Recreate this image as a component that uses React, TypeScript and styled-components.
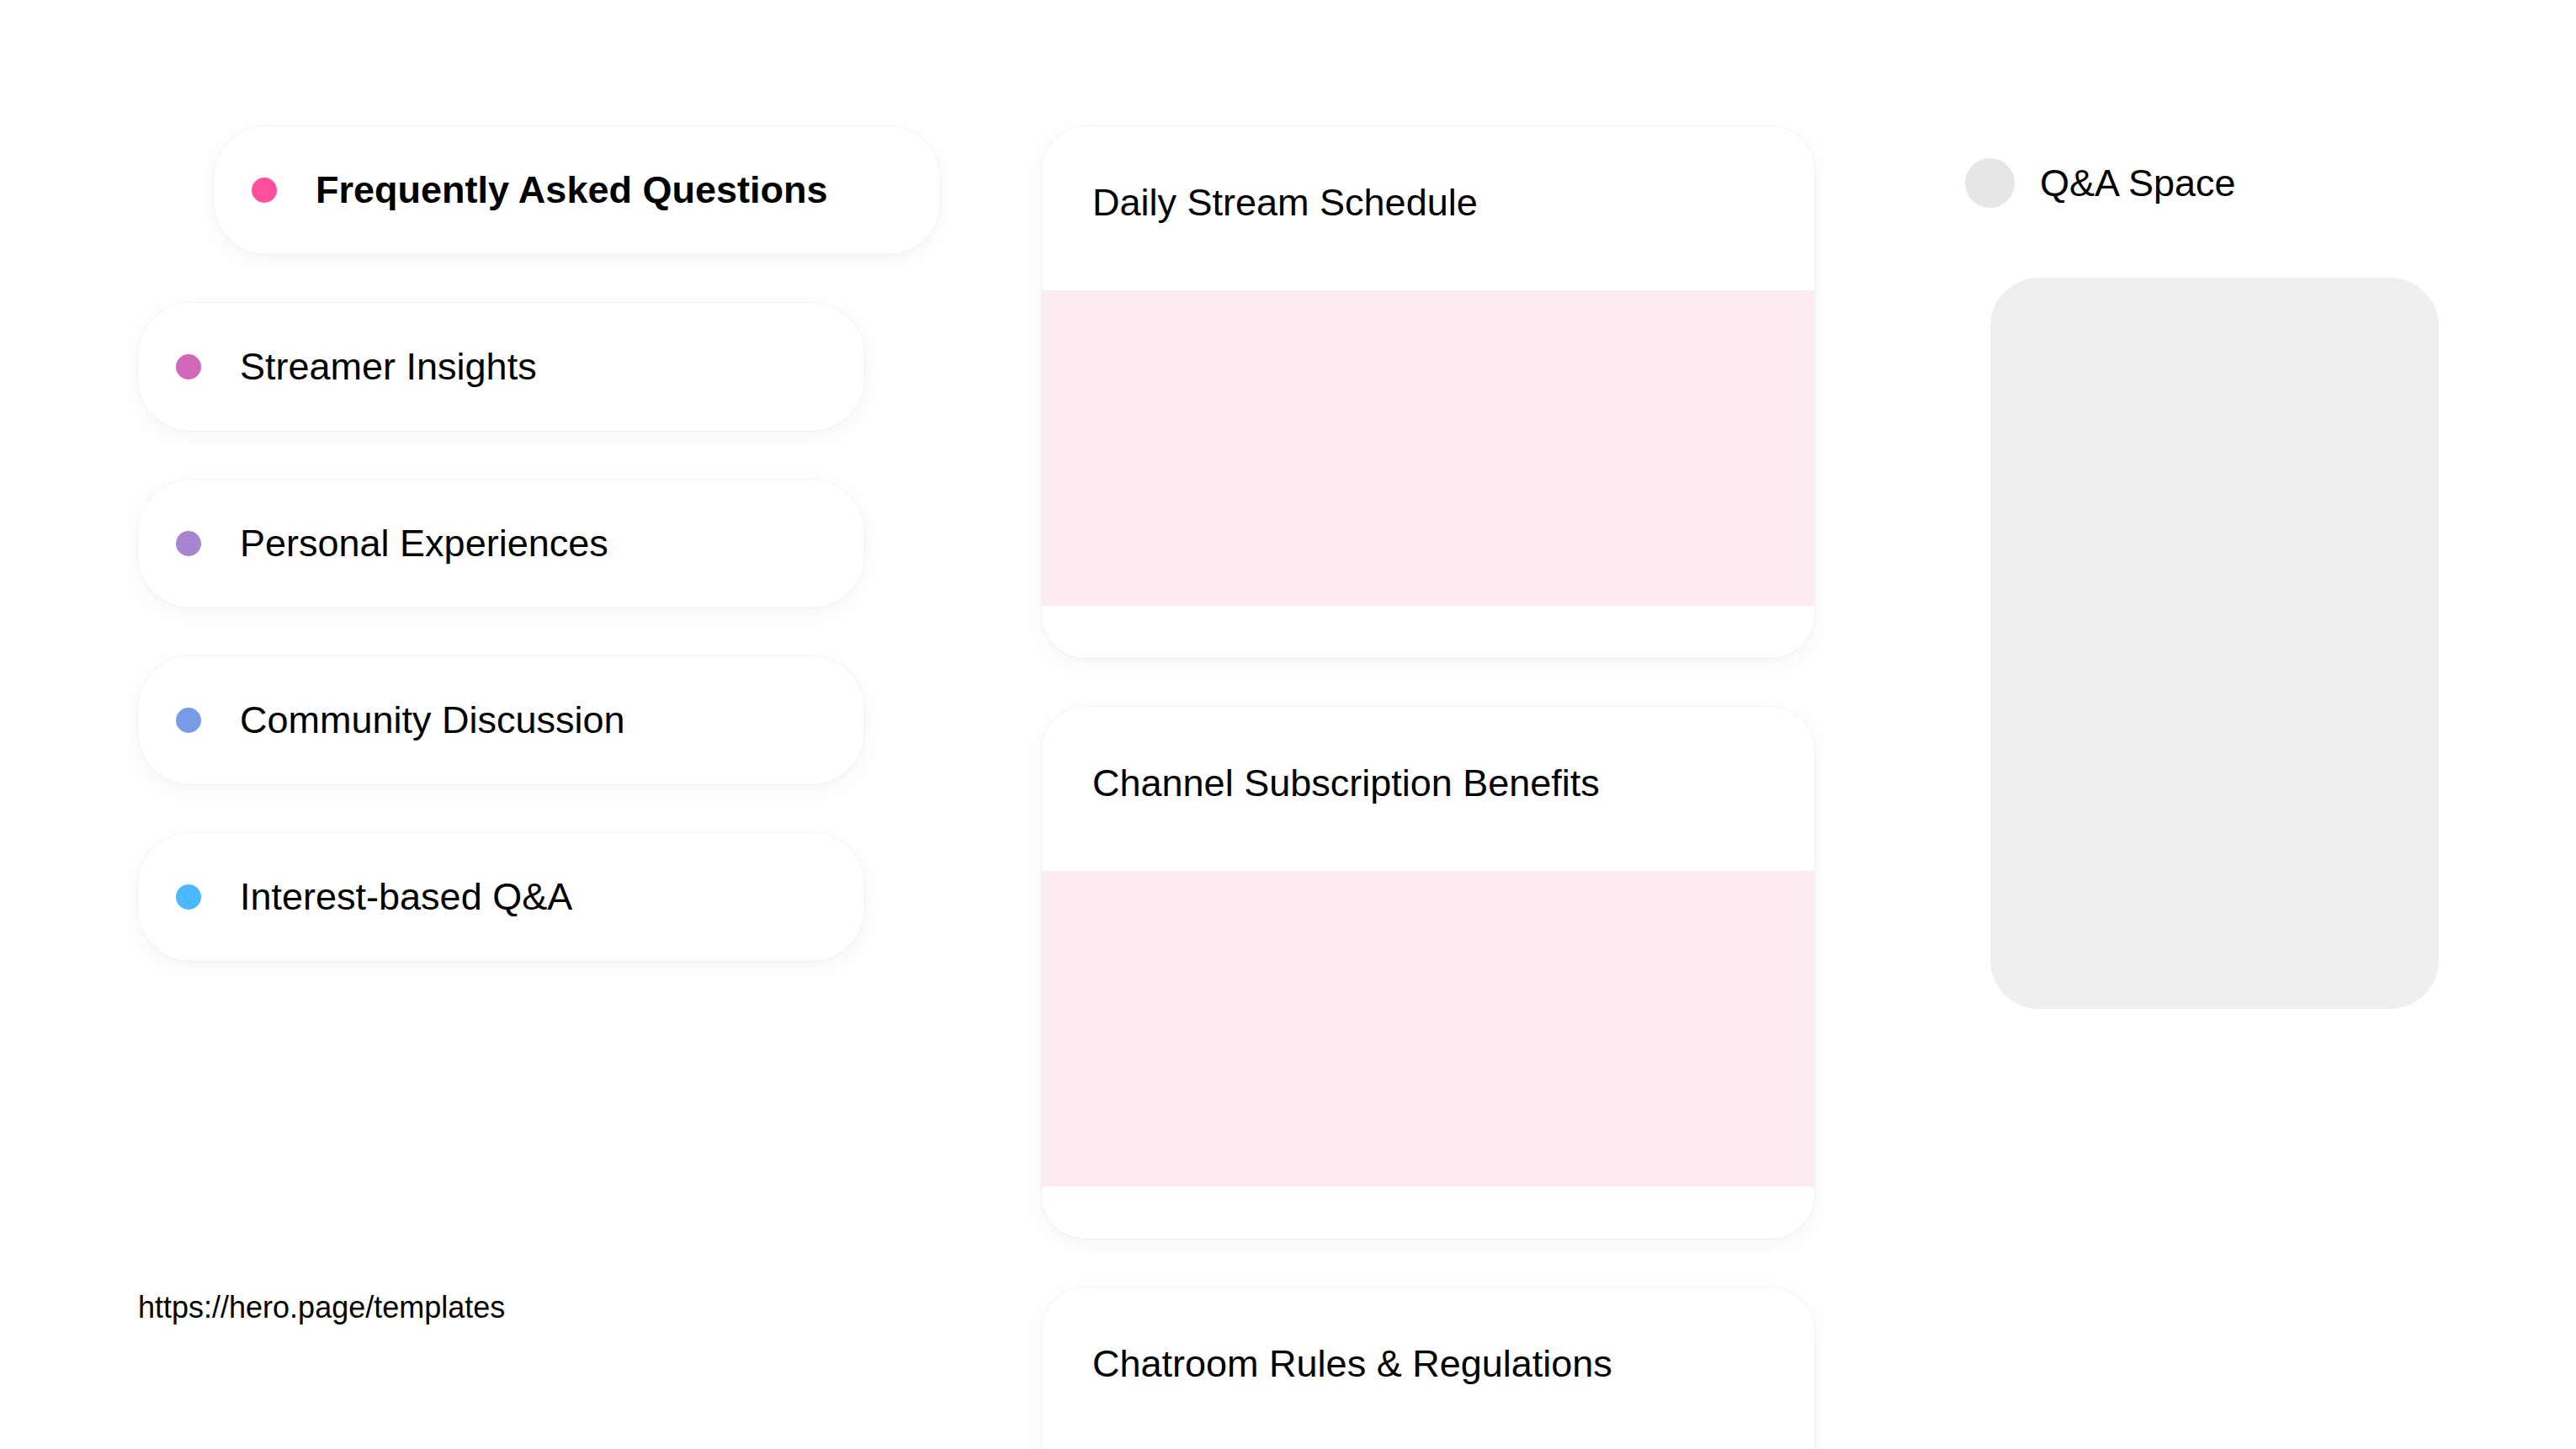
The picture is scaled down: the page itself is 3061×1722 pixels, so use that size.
import React from "react";
import styled, { createGlobalStyle } from "styled-components";

const GlobalStyle = createGlobalStyle`
  html, body {
    margin: 0;
    padding: 0;
    background: #ffffff;
  }
  body {
    font-family: "Liberation Sans", Arial, sans-serif;
    color: #000000;
    overflow: hidden;
  }
  * { box-sizing: border-box; }
`;

const Page = styled.div`
  width: 3061px;
  height: 1722px;
  overflow: hidden;
  display: flex;
  align-items: flex-start;
  padding: 150px 0 0 164px;
`;

const LeftColumn = styled.nav`
  width: 953px;
  display: flex;
  flex-direction: column;
  gap: 58px;
`;

const Pill = styled.div<{ $active?: boolean }>`
  width: 863px;
  height: 152px;
  margin-left: ${(p) => (p.$active ? "90px" : "0")};
  border-radius: 62px;
  background: #ffffff;
  box-shadow: 0 0 0 1px rgba(0, 0, 0, 0.035), 0 6px 22px rgba(0, 0, 0, 0.045);
  display: flex;
  align-items: center;
  padding-left: 45px;
  gap: 46px;
`;

const Dot = styled.span<{ $color: string }>`
  width: 30px;
  height: 30px;
  border-radius: 50%;
  background: ${(p) => p.$color};
  flex: none;
`;

const PillLabel = styled.span<{ $active?: boolean }>`
  font-size: 45px;
  font-weight: ${(p) => (p.$active ? 700 : 400)};
  white-space: nowrap;
`;

const FooterLink = styled.div`
  margin-top: 333px;
  font-size: 36px;
  white-space: nowrap;
`;

const MiddleColumn = styled.main`
  width: 918px;
  margin-left: 121px;
  display: flex;
  flex-direction: column;
  gap: 58px;
`;

const Card = styled.section`
  width: 918px;
  height: 632px;
  flex: none;
  border-radius: 52px;
  background: #ffffff;
  box-shadow: 0 0 0 1px rgba(0, 0, 0, 0.035), 0 6px 22px rgba(0, 0, 0, 0.045);
  overflow: hidden;
  display: flex;
  flex-direction: column;
`;

const CardHeader = styled.h2`
  margin: 0;
  height: 195px;
  padding: 65px 0 0 60px;
  font-size: 45px;
  font-weight: 400;
  line-height: normal;
  white-space: nowrap;
`;

const CardBand = styled.div`
  height: 375px;
  background: #fcebf3;
`;

const RightColumn = styled.aside`
  width: 563px;
  margin-left: 179px;
  padding-top: 38px;
  display: flex;
  flex-direction: column;
`;

const SpaceHeader = styled.div`
  display: flex;
  align-items: center;
  gap: 30px;
  height: 59px;
`;

const SpaceCircle = styled.span`
  width: 59px;
  height: 59px;
  border-radius: 50%;
  background: #e6e6e6;
  flex: none;
`;

const SpaceTitle = styled.span`
  font-size: 45px;
  white-space: nowrap;
`;

const SpaceBox = styled.div`
  margin: 83px 0 0 30px;
  width: 533px;
  height: 869px;
  border-radius: 58px;
  background: #efefef;
`;

const navItems = [
  { label: "Frequently Asked Questions", color: "#ff4f9f", active: true },
  { label: "Streamer Insights", color: "#d067b8" },
  { label: "Personal Experiences", color: "#a885d0" },
  { label: "Community Discussion", color: "#789be8" },
  { label: "Interest-based Q&A", color: "#4cb8ff" },
];

const cards = [
  "Daily Stream Schedule",
  "Channel Subscription Benefits",
  "Chatroom Rules & Regulations",
];

export default function App() {
  return (
    <>
      <GlobalStyle />
      <Page>
        <LeftColumn>
          {navItems.map((item) => (
            <Pill key={item.label} $active={item.active}>
              <Dot $color={item.color} />
              <PillLabel $active={item.active}>{item.label}</PillLabel>
            </Pill>
          ))}
          <FooterLink>https://hero.page/templates</FooterLink>
        </LeftColumn>
        <MiddleColumn>
          {cards.map((title) => (
            <Card key={title}>
              <CardHeader>{title}</CardHeader>
              <CardBand />
            </Card>
          ))}
        </MiddleColumn>
        <RightColumn>
          <SpaceHeader>
            <SpaceCircle />
            <SpaceTitle>Q&amp;A Space</SpaceTitle>
          </SpaceHeader>
          <SpaceBox />
        </RightColumn>
      </Page>
    </>
  );
}
